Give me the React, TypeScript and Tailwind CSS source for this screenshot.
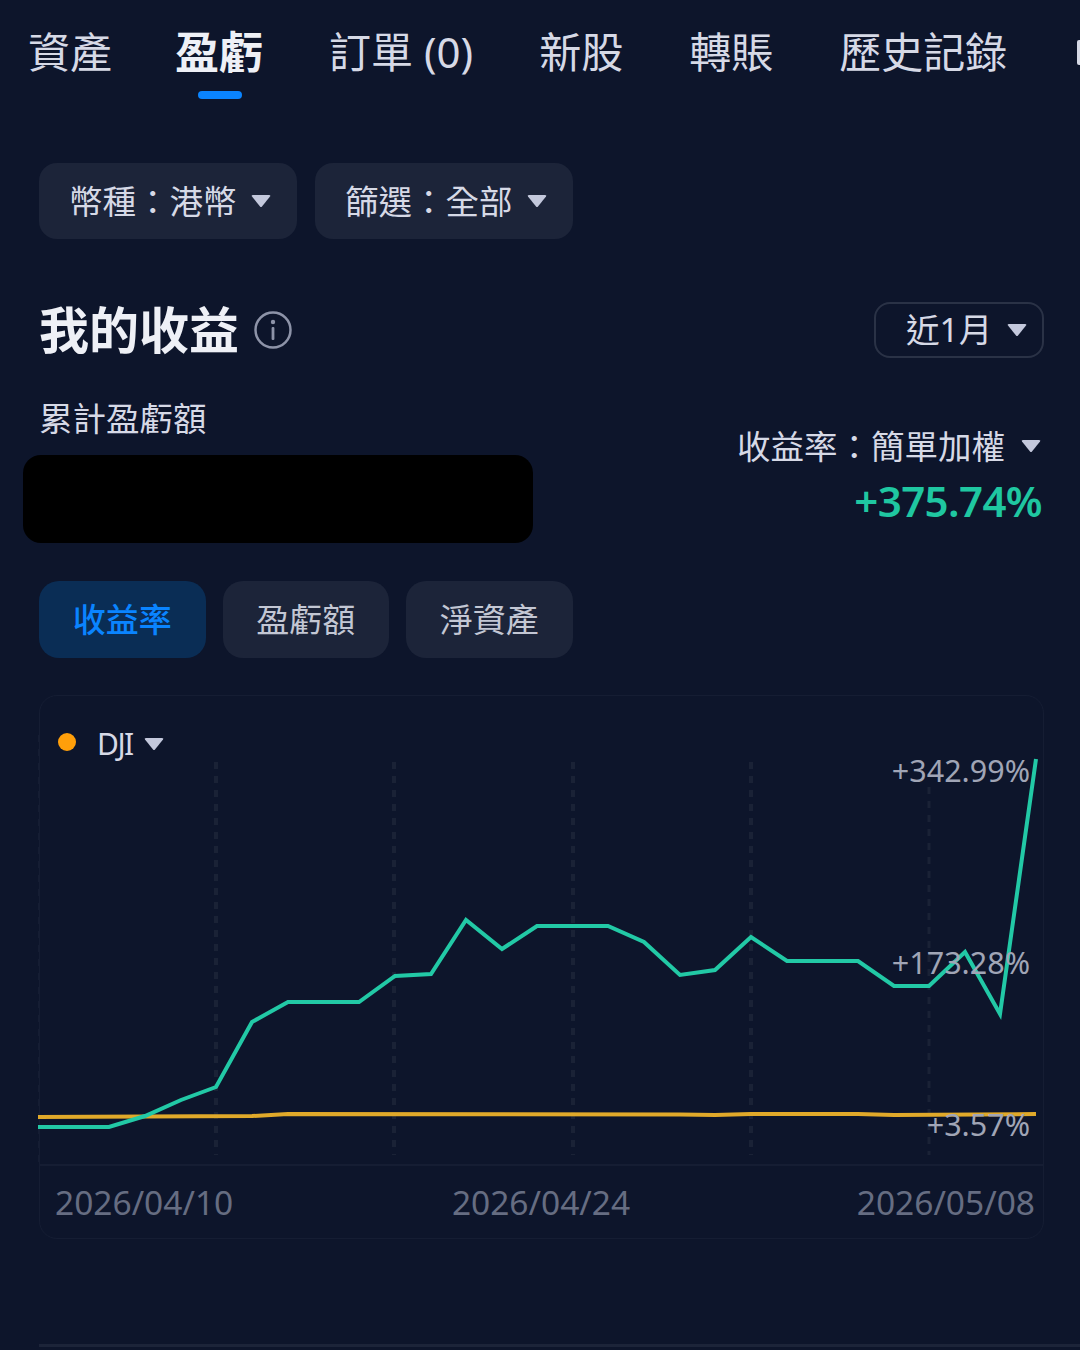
const tabs = ["資產", "盈虧", "訂單 (0)", "新股", "轉賬", "歷史記錄"];

const Caret = ({ className = "" }: { className?: string }) => (
  <svg viewBox="0 0 20 14" className={`w-[20px] h-[14px] shrink-0 ${className}`}>
    <path d="M1 2.5 Q0 1 2 1 H18 Q20 1 19 2.5 L11 12.5 Q10 13.5 9 12.5 Z" fill="#c3c8dc" />
  </svg>
);

const teal = [
  [38, 1127], [109, 1127], [145, 1116], [181, 1100], [216, 1087], [252, 1022], [288, 1002],
  [359, 1002], [395, 976], [431, 974], [466, 920], [502, 949], [537, 926], [608, 926],
  [644, 942], [680, 975], [715, 970], [751, 937], [787, 961], [858, 961], [894, 986],
  [929, 986], [965, 952], [1000, 1014], [1036, 759],
];

const gold = [
  [38, 1117], [252, 1116], [288, 1114], [680, 1114.5], [715, 1115], [751, 1114],
  [858, 1114], [894, 1115], [1036, 1114],
];

const toPoints = (pts: number[][]) => pts.map(([x, y]) => `${x - 39},${y - 695}`).join(" ");

const Chart = () => (
  <div className="relative mt-[37px] h-[544px] rounded-[18px] border border-[#151d33]">
    <svg viewBox="0 0 1005 544" className="absolute left-[-1px] top-[-1px] w-[1005px] h-[544px] overflow-visible">
      {[177, 355, 534, 712].map((x) => (
        <line key={x} x1={x} x2={x} y1={67} y2={460} stroke="#1a2236" strokeWidth="4" strokeDasharray="7 7" />
      ))}
      <line x1={890} x2={890} y1={92} y2={460} stroke="#1a2236" strokeWidth="3" strokeDasharray="7 7" />
      <line x1={0} x2={0} y1={40} y2={470} stroke="#151d33" strokeWidth="2" strokeDasharray="7 7" />
      <line x1={0} x2={1005} y1={470} y2={470} stroke="#151d33" strokeWidth="2" />
      <polyline points={toPoints(gold)} fill="none" stroke="#e0a92a" strokeWidth="4" />
      <polyline points={toPoints(teal)} fill="none" stroke="#22c9a6" strokeWidth="4" />
    </svg>
    <div className="absolute left-[18px] top-[30px] flex items-center">
      <span className="mb-[4px] w-[18px] h-[18px] rounded-full bg-[#ff9f0a]" />
      <span className="ml-[21px] text-[30px] leading-[36px] tracking-[-1.5px] text-[#d6d9e6]">DJI</span>
      <Caret className="ml-[11px]" />
    </div>
    <span className="absolute right-[13px] top-[56px] text-[30.5px] leading-[36px] text-[#a0a5b6]">+342.99%</span>
    <span className="absolute right-[13px] top-[248px] text-[30.5px] leading-[36px] text-[#a0a5b6]">+173.28%</span>
    <span className="absolute right-[13px] top-[410px] text-[30.5px] leading-[36px] text-[#a0a5b6]">+3.57%</span>
    <div className="absolute left-[15px] right-[8px] top-[486px] flex justify-between text-[33.5px] leading-[40px] text-[#666d82]">
      <span>2026/04/10</span>
      <span className="mr-[8px]">2026/04/24</span>
      <span>2026/05/08</span>
    </div>
  </div>
);

export default function App() {
  return (
    <div
      className="relative w-[1080px] h-[1350px] overflow-hidden bg-[#0d152b] text-[#d6d9e6]"
      style={{ fontFamily: '"Noto Sans", "Noto Sans CJK TC", sans-serif' }}
    >
      <nav className="flex items-start pl-[28px] pt-[27px] h-[163px] gap-[66px] whitespace-nowrap">
        {tabs.map((t) => (
          <div key={t} className={t === "盈虧" ? "relative ml-[-3px]" : "relative"}>
            <span
              className={
                t === "盈虧"
                  ? "block text-[44px] leading-[50px] font-bold text-[#eef0f6]"
                  : "block text-[42px] leading-[50px] text-[#d6d9e6]"
              }
            >
              {t}
            </span>
            {t === "盈虧" && (
              <div className="absolute left-[23px] top-[64px] w-[44px] h-[8px] rounded-full bg-[#0a84ff]" />
            )}
          </div>
        ))}
        <div className="absolute left-[1077px] top-[40px] w-[6px] h-[25px] rounded-[2px] bg-[#d6d9e6]" />
      </nav>

      <div className="pl-[39px] pr-[36px]">
        <div className="flex gap-[18px]">
          <div className="flex items-center justify-between w-[258px] h-[76px] pl-[30px] pr-[26px] rounded-[18px] bg-[#1c2439] text-[33.5px] whitespace-nowrap">
            <span>幣種：港幣</span>
            <Caret />
          </div>
          <div className="flex items-center justify-between w-[258px] h-[76px] pl-[30px] pr-[26px] rounded-[18px] bg-[#1c2439] text-[33.5px] whitespace-nowrap">
            <span>篩選：全部</span>
            <Caret />
          </div>
        </div>

        <div className="flex items-center justify-between mt-[63px] h-[55px]">
          <div className="flex items-center">
            <h1 className="text-[50px] leading-[60px] font-bold text-[#eef0f6]">我的收益</h1>
            <svg viewBox="0 0 38 38" className="ml-[15px] w-[38px] h-[38px]" fill="none">
              <circle cx="19" cy="19" r="17.5" stroke="#8d93a8" strokeWidth="2.5" />
              <circle cx="19" cy="11" r="2.2" fill="#8d93a8" />
              <rect x="17.6" y="16" width="2.8" height="13" rx="1" fill="#8d93a8" />
            </svg>
          </div>
          <div className="flex items-center justify-between w-[170px] h-[56px] pl-[30px] pr-[15px] rounded-[16px] border-2 border-[#2a3246] text-[33.5px] whitespace-nowrap">
            <span>近1月</span>
            <Caret />
          </div>
        </div>

        <div className="relative flex justify-between mt-[25px] h-[199px]">
          <div className="pt-[12px] text-[33.5px] leading-[48px]">累計盈虧額</div>
          <div className="absolute left-[-16px] top-[73px] w-[510px] h-[88px] rounded-[18px] bg-black" />
          <div className="flex flex-col items-end pt-[40px]">
            <div className="flex items-center gap-[16px] text-[33.5px] leading-[48px] whitespace-nowrap">
              <span>收益率：簡單加權</span>
              <Caret className="mr-[3px]" />
            </div>
            <div className="mt-[3px] mr-[2px] text-[42px] leading-[56px] font-semibold tracking-[-0.6px] text-[#1fc7a1]">+375.74%</div>
          </div>
        </div>

        <div className="flex gap-[17px]">
          <div className="flex items-center justify-center w-[166.5px] h-[77px] rounded-[20px] bg-[#0a2d55] text-[33px] font-medium text-[#0a84ff]">收益率</div>
          <div className="flex items-center justify-center w-[166.5px] h-[77px] rounded-[20px] bg-[#1c2439] text-[33px] text-[#c3c7d4]">盈虧額</div>
          <div className="flex items-center justify-center w-[166.5px] h-[77px] rounded-[20px] bg-[#1c2439] text-[33px] text-[#c3c7d4]">淨資產</div>
        </div>

        <Chart />

        <div className="mt-[105px] mr-[-36px] h-[3px] bg-[#1c2439]" />
      </div>
    </div>
  );
}
